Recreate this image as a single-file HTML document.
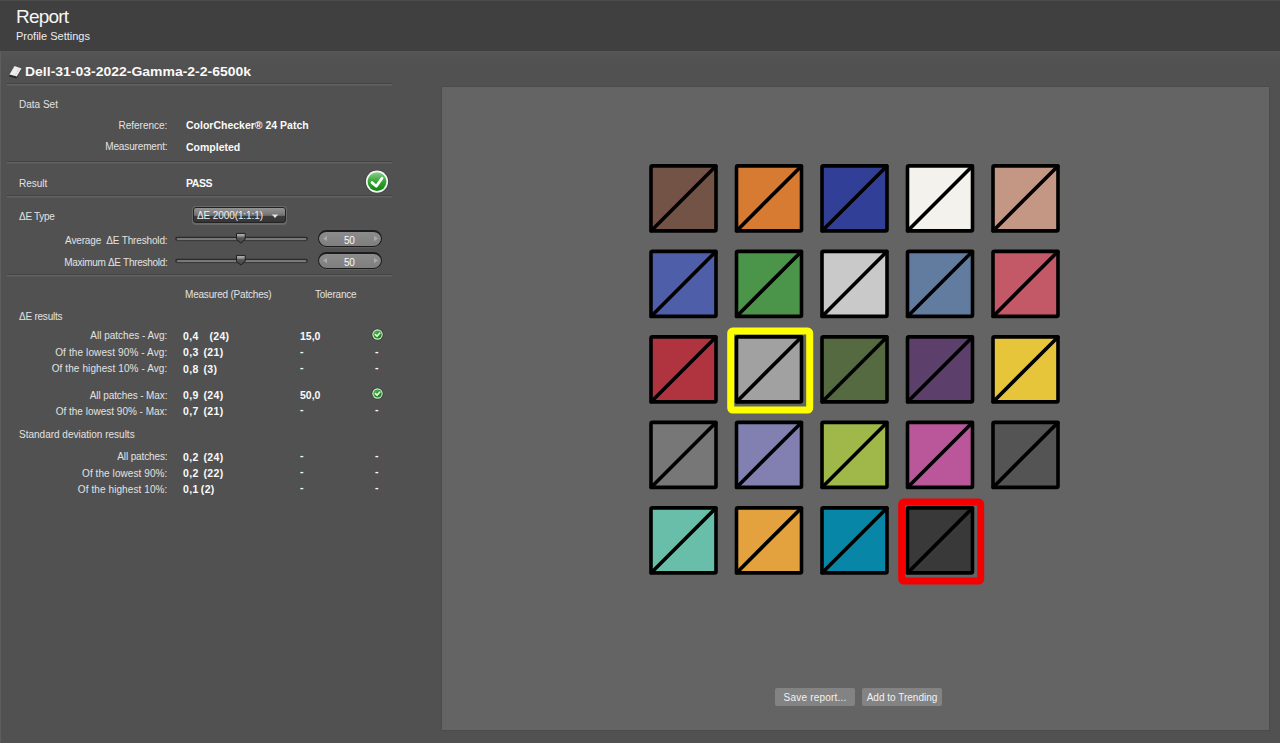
<!DOCTYPE html>
<html><head><meta charset="utf-8">
<style>
*{margin:0;padding:0;box-sizing:border-box}
html,body{width:1280px;height:743px;overflow:hidden;background:#515151;font-family:"Liberation Sans",sans-serif}
.a{position:absolute}
#hdr{left:0;top:0;width:1280px;height:51px;background:#404040;border-top:1px solid #4b4b4b}
#lcol{left:0;top:51px;width:1px;height:692px;background:#5e5e5e}
#grad{left:1px;top:51px;width:1279px;height:14px;background:linear-gradient(#555,#515151)}
.t{position:absolute;white-space:nowrap;line-height:1}
.lbl{color:#e2e2e2;font-size:10px}
.r{text-align:right}
.v{letter-spacing:0.35px}
.b{font-weight:bold;color:#fafafa;font-size:10.5px}
.div1{position:absolute;left:7px;width:385px;height:1px;background:#434343}
.div2{position:absolute;left:7px;width:385px;height:2px;background:linear-gradient(#626262 50%,#585858 50%)}
#panel{left:441px;top:86px;width:829px;height:645px;background:#646464;border:1px solid #4c4c4c}
.p{position:absolute;width:69px;height:69px}
.btn{position:absolute;top:688px;height:18px;width:80px;background:#838383;border-radius:2px;color:#f2f2f2;font-size:10px;text-align:center;line-height:20px}
</style></head><body>
<div id="hdr" class="a"></div>
<div id="grad" class="a"></div>
<div id="lcol" class="a"></div>
<div class="t" style="left:16px;top:7.2px;font-size:19px;letter-spacing:-0.8px;color:#f6f6f6">Report</div>
<div class="t" style="left:16px;top:30.6px;font-size:11px;color:#ececec">Profile Settings</div>

<!-- doc title -->
<svg class="a" style="left:7px;top:64px" width="17" height="15" viewBox="0 0 17 15">
  <path d="M2.5 11.5 L7.5 2.5 L14.5 5 L10 13.5 Z" fill="#1e1e1e" opacity="0.8" transform="translate(-0.5,1)"/>
  <path d="M2.5 10.5 L7.5 2 L14.5 4.5 L9.8 12.5 Z" fill="#ededf0"/>
  <path d="M11.5 5.5 L8 11.5" stroke="#bdbdbd" stroke-width="1" stroke-dasharray="1 1"/>
</svg>
<div class="t" style="left:25px;top:66px;font-size:12.5px;font-weight:bold;color:#fafafa;transform:scaleX(1.118);transform-origin:0 0">Dell-31-03-2022-Gamma-2-2-6500k</div>
<div class="div1" style="top:83px"></div><div class="div2" style="top:84px"></div>

<div class="t lbl" style="left:19px;top:99.5px">Data Set</div>
<div class="t lbl r" style="right:1112.6px;top:120.5px">Reference:</div>
<div class="t b" style="left:186px;top:120px">ColorChecker® 24 Patch</div>
<div class="t lbl r" style="letter-spacing:-0.15px;right:1112.6px;top:142px">Measurement:</div>
<div class="t b" style="left:186px;top:142px">Completed</div>
<div class="div1" style="top:161px"></div><div class="div2" style="top:162px"></div>

<div class="t lbl" style="left:19px;top:178.5px">Result</div>
<div class="t b" style="left:186px;top:178px;letter-spacing:-0.4px">PASS</div>
<svg class="a" style="left:365px;top:170px" width="24" height="24" viewBox="0 0 24 24">
  <defs>
   <linearGradient id="gg" x1="0" y1="0" x2="0" y2="1">
     <stop offset="0" stop-color="#8ccf8c"/><stop offset="0.45" stop-color="#3aa83a"/><stop offset="1" stop-color="#0c820c"/>
   </linearGradient>
  </defs>
  <circle cx="12" cy="11.6" r="11.8" fill="#2e2e2e" opacity="0.6"/>
  <circle cx="12" cy="11.6" r="11.1" fill="#f2f6f2"/>
  <circle cx="12" cy="11.6" r="9.4" fill="url(#gg)"/>
  <path d="M7 12.6 L11.3 16.2 L17 8.2" stroke="#fff" stroke-width="2.8" fill="none" stroke-linecap="round" stroke-linejoin="round"/>
</svg>
<div class="div1" style="top:195px"></div><div class="div2" style="top:196px"></div>

<div class="t lbl" style="letter-spacing:-0.3px;left:19px;top:211.5px">ΔE Type</div>
<!-- dropdown -->
<div class="a" style="left:192px;top:206px;width:95px;height:19px;border-radius:4px;background:#686868"></div>
<div class="a" style="left:193px;top:207px;width:93px;height:16px;border-radius:3px;border:1px solid #232323;background:linear-gradient(#939393 0,#7a7a7a 6px,#6a6a6a 7.5px,#3c3c3c 8px,#353535 100%)"></div>
<div class="t" style="left:197px;top:210.5px;font-size:10px;color:#f0f0f0;letter-spacing:-0.1px">ΔE 2000(1:1:1)</div>
<svg class="a" style="left:271px;top:213.5px" width="8" height="5"><path d="M0.8 0.5 L7.2 0.5 L4 4 Z" fill="#e4e4e4"/></svg>

<div class="t lbl r" style="letter-spacing:-0.16px;right:1112.6px;top:235.7px">Average&nbsp; ΔE Threshold:</div>
<div class="t lbl r" style="letter-spacing:-0.29px;right:1112.6px;top:257.7px">Maximum ΔE Threshold:</div>
<!-- sliders + spinboxes -->
<svg class="a" style="left:0;top:0" width="400" height="280">
 <defs>
  <linearGradient id="th" x1="0" y1="0" x2="0" y2="1">
   <stop offset="0" stop-color="#b4b4b4"/><stop offset="0.25" stop-color="#9a9a9a"/><stop offset="0.45" stop-color="#555"/><stop offset="1" stop-color="#444"/>
  </linearGradient>
 </defs>
 <g id="sl1">
  <defs><linearGradient id="gr" x1="0" y1="0" x2="0" y2="1"><stop offset="0" stop-color="#262626"/><stop offset="1" stop-color="#404040"/></linearGradient></defs>
  <rect x="175" y="236.8" width="133" height="4.4" rx="2.2" fill="url(#gr)"/>
  <rect x="176.8" y="238" width="129.5" height="2" rx="1" fill="#797979"/>
  <path d="M236.5 233.4 L245.2 233.4 L245.2 239.3 L240.85 243.1 L236.5 239.3 Z" fill="url(#th)" stroke="#1e1e1e" stroke-width="1"/>
 </g>
 <use href="#sl1" y="22"/>
</svg>
<div class="a" style="left:318px;top:230px;width:64px;height:17px;border-radius:9px;background:linear-gradient(#8c8c8c,#7e7e7e);border:1.5px solid #1c1c1c;border-top-width:2px;box-shadow:0 1px 0 #5e5e5e"></div>
<div class="a" style="left:318px;top:252px;width:64px;height:17px;border-radius:9px;background:linear-gradient(#8c8c8c,#7e7e7e);border:1.5px solid #1c1c1c;border-top-width:2px;box-shadow:0 1px 0 #5e5e5e"></div>
<svg class="a" style="left:322px;top:234px" width="6" height="9"><path d="M5 1.8 L5 7.2 L1 4.5 Z" fill="#a8a8a8"/></svg>
<svg class="a" style="left:373px;top:234px" width="6" height="9"><path d="M1 1.8 L1 7.2 L5 4.5 Z" fill="#a8a8a8"/></svg>
<svg class="a" style="left:322px;top:256px" width="6" height="9"><path d="M5 1.8 L5 7.2 L1 4.5 Z" fill="#a8a8a8"/></svg>
<svg class="a" style="left:373px;top:256px" width="6" height="9"><path d="M1 1.8 L1 7.2 L5 4.5 Z" fill="#a8a8a8"/></svg>
<div class="t" style="left:344px;top:235.5px;font-size:10px;color:#fafafa;letter-spacing:-0.3px">50</div>
<div class="t" style="left:344px;top:257.5px;font-size:10px;color:#fafafa;letter-spacing:-0.3px">50</div>
<div class="div1" style="top:274px"></div><div class="div2" style="top:275px"></div>

<div class="t lbl" style="letter-spacing:-0.2px;left:185px;top:290px">Measured (Patches)</div>
<div class="t lbl" style="letter-spacing:-0.22px;left:315px;top:290px">Tolerance</div>
<div class="t lbl" style="letter-spacing:-0.23px;left:19px;top:311.5px">ΔE results</div>

<div class="t lbl r" style="right:1112.6px;top:331px">All patches - Avg:</div>
<div class="t b v" style="left:183px;top:330.5px">0,4</div><div class="t b v" style="left:209.4px;top:330.5px">(24)</div>
<div class="t b" style="left:300px;top:330.5px">15,0</div>
<div class="t lbl r" style="letter-spacing:0.12px;right:1112.6px;top:347.5px">Of the lowest 90% - Avg:</div>
<div class="t b v" style="left:183px;top:347px">0,3</div><div class="t b v" style="left:203.5px;top:347px">(21)</div>
<div class="t b" style="left:300px;top:345.7px">-</div><div class="t b" style="left:375px;top:345.7px">-</div>
<div class="t lbl r" style="letter-spacing:0.1px;right:1112.6px;top:364px">Of the highest 10% - Avg:</div>
<div class="t b v" style="left:183px;top:363.5px">0,8</div><div class="t b v" style="left:203.5px;top:363.5px">(3)</div>
<div class="t b" style="left:300px;top:362.2px">-</div><div class="t b" style="left:375px;top:362.2px">-</div>

<div class="t lbl r" style="letter-spacing:-0.1px;right:1112.6px;top:390.8px">All patches - Max:</div>
<div class="t b v" style="left:183px;top:389.5px">0,9</div><div class="t b v" style="left:203.5px;top:389.5px">(24)</div>
<div class="t b" style="left:300px;top:389.5px">50,0</div>
<div class="t lbl r" style="right:1112.6px;top:406.8px">Of the lowest 90% - Max:</div>
<div class="t b v" style="left:183px;top:405.5px">0,7</div><div class="t b v" style="left:203.5px;top:405.5px">(21)</div>
<div class="t b" style="left:300px;top:404.2px">-</div><div class="t b" style="left:375px;top:404.2px">-</div>

<div class="t lbl" style="left:19px;top:429.8px">Standard deviation results</div>
<div class="t lbl r" style="letter-spacing:-0.13px;right:1112.6px;top:452.4px">All patches:</div>
<div class="t b v" style="left:183px;top:451.5px">0,2</div><div class="t b v" style="left:203.5px;top:451.5px">(24)</div>
<div class="t b" style="left:300px;top:450.2px">-</div><div class="t b" style="left:375px;top:450.2px">-</div>
<div class="t lbl r" style="letter-spacing:0.08px;right:1112.6px;top:469px">Of the lowest 90%:</div>
<div class="t b v" style="left:183px;top:467.5px">0,2</div><div class="t b v" style="left:203.5px;top:467.5px">(22)</div>
<div class="t b" style="left:300px;top:466.2px">-</div><div class="t b" style="left:375px;top:466.2px">-</div>
<div class="t lbl r" style="letter-spacing:0.09px;right:1112.6px;top:484.8px">Of the highest 10%:</div>
<div class="t b v" style="left:183px;top:483.5px">0,1</div><div class="t b v" style="left:200.8px;top:483.5px">(2)</div>
<div class="t b" style="left:300px;top:482.2px">-</div><div class="t b" style="left:375px;top:482.2px">-</div>

<svg class="a" style="left:370.7px;top:327.5px" width="13" height="13" viewBox="0 0 13 13"><defs><linearGradient id="sg328" x1="0" y1="0" x2="1" y2="1"><stop offset="0" stop-color="#5cc05c"/><stop offset="1" stop-color="#087008"/></linearGradient></defs><circle cx="6.5" cy="6.5" r="6.1" fill="#2a2a2a" opacity="0.55"/><circle cx="6.5" cy="6.5" r="5.2" fill="#cfeacf"/><circle cx="6.5" cy="6.5" r="4.1" fill="url(#sg328)"/><path d="M4.4 6.6 L6.1 8.1 L8.9 5" stroke="#e6ffe6" stroke-width="1.5" fill="none" stroke-linecap="round"/></svg>
<svg class="a" style="left:370.7px;top:386.7px" width="13" height="13" viewBox="0 0 13 13"><defs><linearGradient id="sg387" x1="0" y1="0" x2="1" y2="1"><stop offset="0" stop-color="#5cc05c"/><stop offset="1" stop-color="#087008"/></linearGradient></defs><circle cx="6.5" cy="6.5" r="6.1" fill="#2a2a2a" opacity="0.55"/><circle cx="6.5" cy="6.5" r="5.2" fill="#cfeacf"/><circle cx="6.5" cy="6.5" r="4.1" fill="url(#sg387)"/><path d="M4.4 6.6 L6.1 8.1 L8.9 5" stroke="#e6ffe6" stroke-width="1.5" fill="none" stroke-linecap="round"/></svg>

<div id="panel" class="a"></div>
<!-- PATCHES -->
<svg class="a" style="left:0;top:0" width="1280" height="743" id="patches"><rect x="651.00" y="165.90" width="65.00" height="65.00" rx="1.5" fill="#735345" stroke="#000" stroke-width="3.6"/><line x1="651.00" y1="230.90" x2="716.00" y2="165.90" stroke="#000" stroke-width="3.6" stroke-linecap="round"/><rect x="736.50" y="165.90" width="65.00" height="65.00" rx="1.5" fill="#d87b32" stroke="#000" stroke-width="3.6"/><line x1="736.50" y1="230.90" x2="801.50" y2="165.90" stroke="#000" stroke-width="3.6" stroke-linecap="round"/><rect x="822.00" y="165.90" width="65.00" height="65.00" rx="1.5" fill="#323f96" stroke="#000" stroke-width="3.6"/><line x1="822.00" y1="230.90" x2="887.00" y2="165.90" stroke="#000" stroke-width="3.6" stroke-linecap="round"/><rect x="907.50" y="165.90" width="65.00" height="65.00" rx="1.5" fill="#f4f2ec" stroke="#000" stroke-width="3.6"/><line x1="907.50" y1="230.90" x2="972.50" y2="165.90" stroke="#000" stroke-width="3.6" stroke-linecap="round"/><rect x="993.00" y="165.90" width="65.00" height="65.00" rx="1.5" fill="#c49684" stroke="#000" stroke-width="3.6"/><line x1="993.00" y1="230.90" x2="1058.00" y2="165.90" stroke="#000" stroke-width="3.6" stroke-linecap="round"/><rect x="651.00" y="251.40" width="65.00" height="65.00" rx="1.5" fill="#4f5ea8" stroke="#000" stroke-width="3.6"/><line x1="651.00" y1="316.40" x2="716.00" y2="251.40" stroke="#000" stroke-width="3.6" stroke-linecap="round"/><rect x="736.50" y="251.40" width="65.00" height="65.00" rx="1.5" fill="#4a9549" stroke="#000" stroke-width="3.6"/><line x1="736.50" y1="316.40" x2="801.50" y2="251.40" stroke="#000" stroke-width="3.6" stroke-linecap="round"/><rect x="822.00" y="251.40" width="65.00" height="65.00" rx="1.5" fill="#c9c9c9" stroke="#000" stroke-width="3.6"/><line x1="822.00" y1="316.40" x2="887.00" y2="251.40" stroke="#000" stroke-width="3.6" stroke-linecap="round"/><rect x="907.50" y="251.40" width="65.00" height="65.00" rx="1.5" fill="#617c9f" stroke="#000" stroke-width="3.6"/><line x1="907.50" y1="316.40" x2="972.50" y2="251.40" stroke="#000" stroke-width="3.6" stroke-linecap="round"/><rect x="993.00" y="251.40" width="65.00" height="65.00" rx="1.5" fill="#c35966" stroke="#000" stroke-width="3.6"/><line x1="993.00" y1="316.40" x2="1058.00" y2="251.40" stroke="#000" stroke-width="3.6" stroke-linecap="round"/><rect x="651.00" y="336.90" width="65.00" height="65.00" rx="1.5" fill="#b0343f" stroke="#000" stroke-width="3.6"/><line x1="651.00" y1="401.90" x2="716.00" y2="336.90" stroke="#000" stroke-width="3.6" stroke-linecap="round"/><rect x="736.50" y="336.90" width="65.00" height="65.00" rx="1.5" fill="#a1a1a1" stroke="#000" stroke-width="3.6"/><line x1="736.50" y1="401.90" x2="801.50" y2="336.90" stroke="#000" stroke-width="3.6" stroke-linecap="round"/><rect x="822.00" y="336.90" width="65.00" height="65.00" rx="1.5" fill="#566a42" stroke="#000" stroke-width="3.6"/><line x1="822.00" y1="401.90" x2="887.00" y2="336.90" stroke="#000" stroke-width="3.6" stroke-linecap="round"/><rect x="907.50" y="336.90" width="65.00" height="65.00" rx="1.5" fill="#5c3f6b" stroke="#000" stroke-width="3.6"/><line x1="907.50" y1="401.90" x2="972.50" y2="336.90" stroke="#000" stroke-width="3.6" stroke-linecap="round"/><rect x="993.00" y="336.90" width="65.00" height="65.00" rx="1.5" fill="#e7c53a" stroke="#000" stroke-width="3.6"/><line x1="993.00" y1="401.90" x2="1058.00" y2="336.90" stroke="#000" stroke-width="3.6" stroke-linecap="round"/><rect x="651.00" y="422.40" width="65.00" height="65.00" rx="1.5" fill="#777777" stroke="#000" stroke-width="3.6"/><line x1="651.00" y1="487.40" x2="716.00" y2="422.40" stroke="#000" stroke-width="3.6" stroke-linecap="round"/><rect x="736.50" y="422.40" width="65.00" height="65.00" rx="1.5" fill="#8180b0" stroke="#000" stroke-width="3.6"/><line x1="736.50" y1="487.40" x2="801.50" y2="422.40" stroke="#000" stroke-width="3.6" stroke-linecap="round"/><rect x="822.00" y="422.40" width="65.00" height="65.00" rx="1.5" fill="#a0b74a" stroke="#000" stroke-width="3.6"/><line x1="822.00" y1="487.40" x2="887.00" y2="422.40" stroke="#000" stroke-width="3.6" stroke-linecap="round"/><rect x="907.50" y="422.40" width="65.00" height="65.00" rx="1.5" fill="#ba579a" stroke="#000" stroke-width="3.6"/><line x1="907.50" y1="487.40" x2="972.50" y2="422.40" stroke="#000" stroke-width="3.6" stroke-linecap="round"/><rect x="993.00" y="422.40" width="65.00" height="65.00" rx="1.5" fill="#545454" stroke="#000" stroke-width="3.6"/><line x1="993.00" y1="487.40" x2="1058.00" y2="422.40" stroke="#000" stroke-width="3.6" stroke-linecap="round"/><rect x="651.00" y="507.90" width="65.00" height="65.00" rx="1.5" fill="#69bea9" stroke="#000" stroke-width="3.6"/><line x1="651.00" y1="572.90" x2="716.00" y2="507.90" stroke="#000" stroke-width="3.6" stroke-linecap="round"/><rect x="736.50" y="507.90" width="65.00" height="65.00" rx="1.5" fill="#e3a23d" stroke="#000" stroke-width="3.6"/><line x1="736.50" y1="572.90" x2="801.50" y2="507.90" stroke="#000" stroke-width="3.6" stroke-linecap="round"/><rect x="822.00" y="507.90" width="65.00" height="65.00" rx="1.5" fill="#0886a8" stroke="#000" stroke-width="3.6"/><line x1="822.00" y1="572.90" x2="887.00" y2="507.90" stroke="#000" stroke-width="3.6" stroke-linecap="round"/><rect x="907.50" y="507.90" width="65.00" height="65.00" rx="1.5" fill="#393939" stroke="#000" stroke-width="3.6"/><line x1="907.50" y1="572.90" x2="972.50" y2="507.90" stroke="#000" stroke-width="3.6" stroke-linecap="round"/><rect x="730.70" y="331.10" width="79.00" height="79.00" rx="2" fill="none" stroke="#ffff00" stroke-width="7"/><rect x="901.70" y="502.10" width="79.00" height="79.00" rx="2" fill="none" stroke="#f40000" stroke-width="7"/></svg>

<div class="btn" style="left:775px;letter-spacing:0.2px">Save report...</div>
<div class="btn" style="left:862px">Add to Trending</div>
</body></html>
